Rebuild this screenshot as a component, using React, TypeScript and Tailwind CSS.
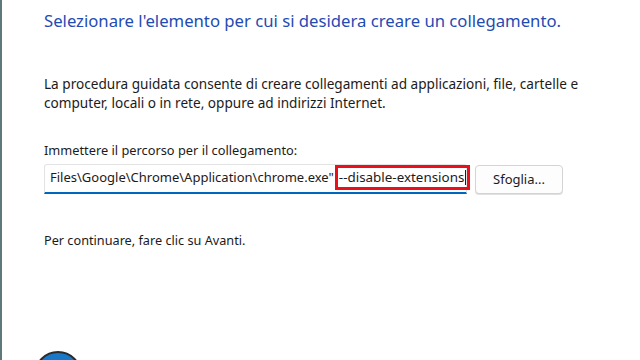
export default function App() {
  return (
    <div className="flex h-[360px] w-[640px] overflow-hidden bg-white font-['Noto_Sans',sans-serif] text-[#1b1b1b]">
      <div className="w-[2px] shrink-0 bg-[#5f787c]" />
      <div className="flex flex-1 flex-col pl-[42px]">
        <h1 className="mt-[10px] text-[16.7px] leading-[22px] text-[#1f4bb4]">
          Selezionare l'elemento per cui si desidera creare un collegamento.
        </h1>

        <p className="mt-[42px] w-[580px] text-[13.6px] leading-[19px]">
          La procedura guidata consente di creare collegamenti ad applicazioni, file, cartelle e
          <br />
          computer, locali o in rete, oppure ad indirizzi Internet.
        </p>

        <label className="mt-[29px] text-[12.8px] leading-[19px]">
          Immettere il percorso per il collegamento:
        </label>

        <div className="mt-[4px] flex items-start gap-[8px]">
          <div className="flex h-[30px] w-[423px] items-start rounded-t-[3px] border border-b-2 border-[#e3e3e3] border-b-[#0067c0] pl-[5px] text-[13px]">
            <span className="flex h-[25px] items-center whitespace-nowrap">
              Files\Google\Chrome\Application\chrome.exe"
            </span>
            <span className="ml-[1px] flex h-[25px] items-center whitespace-nowrap border-[3px] border-[#e8111b] pl-[1px] pr-[1px] text-[13.4px]">
              --disable-extensions
              <span className="ml-[1px] inline-block h-[15px] w-px bg-[#1b1b1b]" />
            </span>
          </div>
          <button className="mt-[1px] h-[29px] w-[88px] rounded-[4px] border border-[#d4d4d4] bg-[#fdfdfd] text-[13px] shadow-[0_1px_0_#e0e0e0]">
            Sfoglia...
          </button>
        </div>

        <p className="mt-[37px] text-[12.7px] leading-[19px]">
          Per continuare, fare clic su Avanti.
        </p>

        <div className="ml-[-10px] mt-[101px] h-[48px] w-[48px] shrink-0 rounded-full border-2 border-[#2b2b2b] bg-[#1a78c9]" />
      </div>
    </div>
  );
}
